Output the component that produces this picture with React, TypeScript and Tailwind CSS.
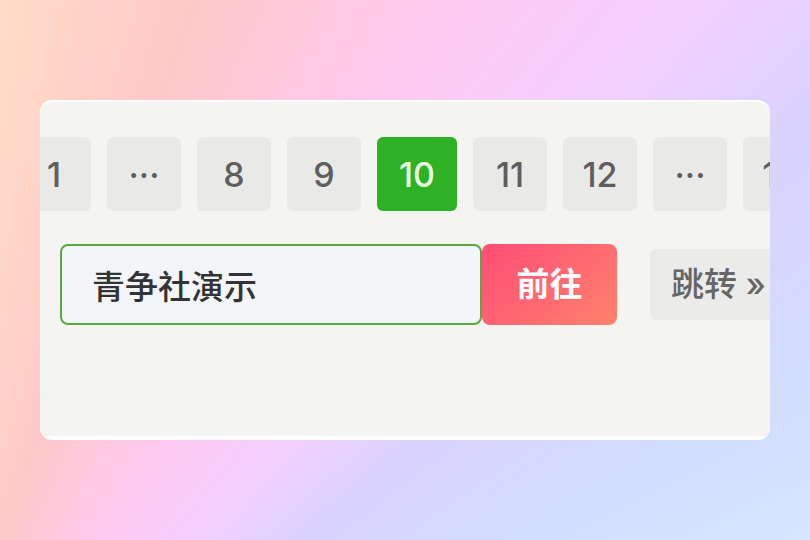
import React from 'react';

const pages: { label: string; active?: boolean }[] = [
  { label: '1' },
  { label: '···' },
  { label: '8' },
  { label: '9' },
  { label: '10', active: true },
  { label: '11' },
  { label: '12' },
  { label: '···' },
  { label: '13' },
];

const font = { fontFamily: 'Inter, "Noto Sans CJK SC", sans-serif' };

export default function App() {
  return (
    <div
      className="w-[810px] h-[540px] bg-[image:conic-gradient(from_0deg_at_-130px_900px,#ffe2c8_0deg,#ffe0c8_6deg,#ffc8c8_20deg,#ffcaf2_33deg,#f2d0ff_43deg,#dad2ff_50deg,#d2dcff_60deg,#d6e8ff_70deg,#d6e8ff_90deg)] pt-[100px] px-[40px]"
      style={font}
    >
      <div className="h-[340px] rounded-xl bg-white pt-[2px] pb-[4px] overflow-hidden">
        <div className="h-full rounded-t-xl bg-[#f4f4f2] overflow-hidden pt-[35px]">
          <div className="flex gap-[16px] ml-[-23px]">
            {pages.map((p, i) => (
              <button
                key={i}
                type="button"
                className={`shrink-0 h-[74px] rounded-md flex items-center justify-center text-[34px] font-medium ${
                  p.active
                    ? 'w-[80px] bg-[#2fb126] text-[#eaffe2]'
                    : 'w-[74px] bg-[#e9e9e8] text-[#5e5e5e]'
                }`}
              >
                {p.label}
              </button>
            ))}
          </div>

          <div className="flex items-center mt-[33px] ml-[20px]">
            <input
              type="text"
              defaultValue="青争社演示"
              className="shrink-0 w-[422px] h-[81px] rounded-lg border-2 border-[#5aa93e] bg-[#f3f5f8] pl-[30px] text-[33px] font-medium text-[#333333] outline-none"
              style={font}
            />
            <button
              type="button"
              className="shrink-0 w-[135px] h-[81px] rounded-lg bg-[linear-gradient(135deg,#ff4d76,#ff826c)] text-white text-[33px] font-bold"
            >
              前往
            </button>
            <button
              type="button"
              className="ml-[33px] shrink-0 h-[71px] pl-[21px] pr-[20px] rounded-md bg-[#ebebea] text-[#666666] text-[33px] font-medium whitespace-nowrap"
            >
              跳转 »
            </button>
          </div>
        </div>
      </div>
    </div>
  );
}
